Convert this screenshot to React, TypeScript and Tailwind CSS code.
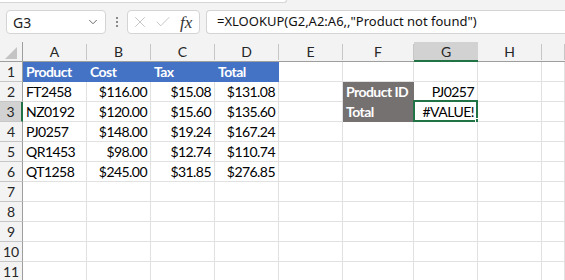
import { X, Check, ChevronDown } from 'lucide-react';

const cols = ['A', 'B', 'C', 'D', 'E', 'F', 'G', 'H', ''];

type Cell = { v?: string; right?: boolean; bold?: boolean; fill?: string };

const data: Record<string, Cell> = {
  A1: { v: 'Product', bold: true, fill: 'blue' },
  B1: { v: 'Cost', bold: true, fill: 'blue' },
  C1: { v: 'Tax', bold: true, fill: 'blue' },
  D1: { v: 'Total', bold: true, fill: 'blue' },
  A2: { v: 'FT2458' }, B2: { v: '$116.00', right: true }, C2: { v: '$15.08', right: true }, D2: { v: '$131.08', right: true },
  A3: { v: 'NZ0192' }, B3: { v: '$120.00', right: true }, C3: { v: '$15.60', right: true }, D3: { v: '$135.60', right: true },
  A4: { v: 'PJ0257' }, B4: { v: '$148.00', right: true }, C4: { v: '$19.24', right: true }, D4: { v: '$167.24', right: true },
  A5: { v: 'QR1453' }, B5: { v: '$98.00', right: true }, C5: { v: '$12.74', right: true }, D5: { v: '$110.74', right: true },
  A6: { v: 'QT1258' }, B6: { v: '$245.00', right: true }, C6: { v: '$31.85', right: true }, D6: { v: '$276.85', right: true },
  F2: { v: 'Product ID', bold: true, fill: 'gray' },
  F3: { v: 'Total', bold: true, fill: 'gray' },
  G2: { v: 'PJ0257', right: true },
  G3: { v: '#VALUE!', right: true },
};

function GridCell({ id }: { id: string }) {
  const c = data[id] || {};
  const fill =
    c.fill === 'blue'
      ? 'bg-[#4472c4] border-[#4472c4] text-white'
      : c.fill === 'gray'
      ? 'bg-[#767171] border-[#767171] text-white'
      : 'bg-white border-[#e1e1e1] text-black';
  return (
    <div className={`relative h-[20px] border-r border-b ${fill} flex items-end pb-[2px] px-[3px] ${c.right ? 'justify-end' : ''}`}>
      <span className={`text-[14px] tracking-[-0.55px] leading-[15px] whitespace-nowrap ${c.bold ? 'font-bold' : ''}`}>{c.v}</span>
      {id === 'G3' && (
        <>
          <div className="absolute -left-[1px] -top-[2px] -right-[1px] -bottom-[1px] border-2 border-[#217346]" />
          <div className="absolute -right-[4px] -bottom-[3px] w-[6px] h-[6px] bg-[#217346] border border-white" />
        </>
      )}
    </div>
  );
}

export default function App() {
  const rows = Array.from({ length: 11 }, (_, i) => i + 1);
  return (
    <div className="w-[565px] h-[280px] overflow-hidden bg-[#f3f3f3] font-['Lato','Liberation_Sans',sans-serif] text-black">
      <div className="relative h-[42px]">
        <div className="absolute left-0 top-0 w-[287px] h-[3px] bg-white border-b border-r border-[#d6d6d6] rounded-br-[4px]" />
        <div className="flex items-start pt-[10px] pl-[6px]">
          <div className="w-[100px] h-[24px] bg-white border border-[#d4d4d4] rounded-[4px] flex items-center justify-between pl-[6px] pr-[5px]">
            <span className="text-[14px] font-['Noto_Sans',sans-serif] text-[#222]">G3</span>
            <ChevronDown className="w-[14px] h-[14px] text-[#555]" strokeWidth={1.5} />
          </div>
          <div className="w-[21px] h-[24px] flex flex-col items-center justify-center gap-[2px]">
            <span className="w-[2px] h-[2px] bg-[#8a8a8a]" />
            <span className="w-[2px] h-[2px] bg-[#8a8a8a]" />
            <span className="w-[2px] h-[2px] bg-[#8a8a8a]" />
          </div>
          <div className="w-[73px] h-[24px] bg-white border border-[#d4d4d4] rounded-[4px] flex items-center pl-[3px]">
            <X className="w-[18px] h-[18px] text-[#b4b4b4]" strokeWidth={1} />
            <Check className="w-[18px] h-[18px] ml-[5px] text-[#b4b4b4]" strokeWidth={1} />
            <span className="ml-[8px] text-[17px] italic font-['Liberation_Serif',serif] text-[#333] leading-none">fx</span>
          </div>
          <div className="ml-[6px] flex-1 h-[24px] bg-white border border-r-0 border-[#d4d4d4] rounded-l-[4px] flex items-center pl-[10px]">
            <span className="text-[13px] font-['Noto_Sans',sans-serif] text-[#111] whitespace-nowrap">=XLOOKUP(G2,A2:A6,,"Product not found")</span>
          </div>
        </div>
      </div>
      <div className="grid grid-cols-[23px_64px_64px_64px_64px_64px_71px_64px_64px_1fr]">
        <div className="relative h-[20px] border-r border-b border-[#9e9e9e] bg-[#f3f3f3]">
          <svg className="absolute left-[5px] top-[5px]" width="12" height="12" viewBox="0 0 12 12">
            <polygon points="12,0 12,12 0,12" fill="#c4c4c4" />
          </svg>
        </div>
        {cols.map((c) => (
          <div
            key={c || 'I'}
            className={`h-[20px] flex items-center justify-center text-[14px] text-[#262626] ${
              c === 'G' ? 'bg-[#d2d2d2] border-b-2 border-b-[#217346]' : 'bg-[#f3f3f3] border-b border-b-[#9e9e9e]'
            }`}
          >
            <div className={`w-full h-[16px] flex items-center justify-center ${c === 'G' ? '' : 'border-r border-[#c6c6c6]'}`}>
              {c}
            </div>
          </div>
        ))}
        {rows.map((r) => (
          <div key={r} className="contents">
            <div
              className={`h-[20px] flex items-center justify-center text-[14px] text-[#262626] border-b border-[#c6c6c6] ${
                r === 3 ? 'bg-[#d2d2d2] border-r-2 border-r-[#217346]' : 'bg-[#f3f3f3] border-r border-r-[#9e9e9e]'
              }`}
            >
              {r}
            </div>
            {cols.map((c) => (
              <GridCell key={c + r} id={c ? c + r : 'I' + r} />
            ))}
          </div>
        ))}
      </div>
    </div>
  );
}
